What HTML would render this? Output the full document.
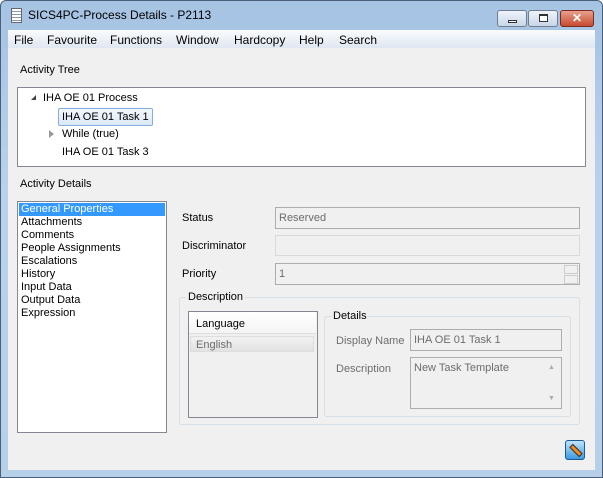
<!DOCTYPE html><html><head><style>
*{margin:0;padding:0;box-sizing:border-box}
body{width:603px;height:478px;overflow:hidden;font-family:"Liberation Sans",sans-serif;font-size:11px;color:#000;background:#fff}
.a{position:absolute}
.win{left:0;top:0;width:603px;height:478px;background:linear-gradient(#a6c3e3,#b9d1ec 40%,#b7d0ea);border:1px solid #4a5f7a;border-radius:6px 6px 0 0}
.t{white-space:nowrap}
.box{background:#f0f0f0;border:1px solid #c2c2c2}
</style></head><body>
<div class="a win"></div>
<div class="a" style="left:11px;top:8px;width:11px;height:15px;background:#fff;border:1px solid #667;background-image:repeating-linear-gradient(#fff 0 2px,#8a97a8 2px 3px)"></div>
<div class="a t" style="left:28px;top:8px;font-size:12px">SICS4PC-Process Details - P2113</div>
<div class="a" style="left:497px;top:10px;width:30px;height:17px;border:1px solid #6e7d92;border-radius:3px;background:linear-gradient(#f0f4fa,#c8d6e8)"><div class="a" style="left:10px;top:9px;width:9px;height:3px;border:1px solid #333;background:#fff"></div></div>
<div class="a" style="left:528px;top:10px;width:30px;height:17px;border:1px solid #6e7d92;border-radius:3px;background:linear-gradient(#f0f4fa,#c8d6e8)"><div class="a" style="left:10px;top:3px;width:9px;height:8px;border:1px solid #333;border-top-width:2px;background:#fff"></div></div>
<div class="a" style="left:560px;top:10px;width:34px;height:17px;border:1px solid #7a2a1e;border-radius:3px;background:linear-gradient(#e8a08c,#c84a30);color:#fff;font-weight:bold;text-align:center;font-size:12px;line-height:15px">✕</div>
<div class="a" style="left:8px;top:30px;width:587px;height:18px;background:linear-gradient(#fafbfd,#dfe7f2)"></div>
<div class="a t" style="left:14px;top:33px;font-size:12px">File</div>
<div class="a t" style="left:47px;top:33px;font-size:12px">Favourite</div>
<div class="a t" style="left:110px;top:33px;font-size:12px">Functions</div>
<div class="a t" style="left:176px;top:33px;font-size:12px">Window</div>
<div class="a t" style="left:234px;top:33px;font-size:12px">Hardcopy</div>
<div class="a t" style="left:299px;top:33px;font-size:12px">Help</div>
<div class="a t" style="left:339px;top:33px;font-size:12px">Search</div>
<div class="a" style="left:8px;top:48px;width:587px;height:422px;background:#f0f0f0"></div>
<div class="a t" style="left:20px;top:64px">Activity Tree</div>
<div class="a" style="left:17px;top:87px;width:569px;height:80px;background:#fff;border:1px solid #828790"></div>
<div class="a" style="left:31px;top:95px;width:0;height:0;border-left:5px solid transparent;border-bottom:5px solid #444"></div>
<div class="a t" style="left:43px;top:92px">IHA OE 01 Process</div>
<div class="a" style="left:58px;top:108px;width:95px;height:18px;border:1px solid #84acdd;border-radius:2px;background:linear-gradient(#f2f7fd,#dce9f8)"></div>
<div class="a t" style="left:62px;top:111px">IHA OE 01 Task 1</div>
<div class="a" style="left:49px;top:130px;width:0;height:0;border-top:4px solid transparent;border-bottom:4px solid transparent;border-left:5px solid #999"></div>
<div class="a t" style="left:62px;top:128px">While (true)</div>
<div class="a t" style="left:62px;top:146px">IHA OE 01 Task 3</div>
<div class="a t" style="left:20px;top:178px">Activity Details</div>
<div class="a" style="left:17px;top:201px;width:150px;height:232px;background:#fff;border:1px solid #828790"></div>
<div class="a" style="left:19px;top:203px;width:146px;height:13px;background:#3399ff"></div>
<div class="a" style="left:21px;top:203px;line-height:13px">
<div style="color:#fff">General Properties</div><div>Attachments</div><div>Comments</div><div>People Assignments</div><div>Escalations</div><div>History</div><div>Input Data</div><div>Output Data</div><div>Expression</div></div>
<div class="a t" style="left:182px;top:212px">Status</div>
<div class="a t" style="left:182px;top:240px">Discriminator</div>
<div class="a t" style="left:182px;top:268px">Priority</div>
<div class="a box t" style="left:275px;top:207px;width:305px;height:22px;border-color:#adadad;color:#6d6d6d;padding:4px 3px">Reserved</div>
<div class="a box" style="left:275px;top:235px;width:305px;height:21px;border-color:#d9d9d9"></div>
<div class="a box t" style="left:275px;top:263px;width:305px;height:22px;border-color:#adadad;color:#6d6d6d;padding:4px 3px">1</div>
<div class="a" style="left:564px;top:265px;width:14px;height:9px;border:1px solid #ccc"></div>
<div class="a" style="left:564px;top:275px;width:14px;height:9px;border:1px solid #ccc"></div>
<div class="a" style="left:179px;top:297px;width:401px;height:128px;border:1px solid #d5dfe5;border-radius:3px"></div>
<div class="a t" style="left:186px;top:291px;background:#f0f0f0;padding:0 2px">Description</div>
<div class="a" style="left:188px;top:311px;width:130px;height:107px;background:#f0f0f0;border:1px solid #828790"></div>
<div class="a" style="left:189px;top:312px;width:127px;height:22px;background:linear-gradient(#fff,#f5f5f5);border-bottom:1px solid #ddd"></div>
<div class="a t" style="left:196px;top:318px">Language</div>
<div class="a" style="left:190px;top:336px;width:124px;height:16px;background:linear-gradient(#f2f2f2,#e2e2e2);border:1px solid #ddd"></div>
<div class="a t" style="left:196px;top:339px;color:#6d6d6d">English</div>
<div class="a" style="left:324px;top:316px;width:247px;height:101px;border:1px solid #d5dfe5;border-radius:3px"></div>
<div class="a t" style="left:332px;top:310px;background:#f0f0f0;padding:0 1px">Details</div>
<div class="a t" style="left:336px;top:335px;color:#6d6d6d">Display Name</div>
<div class="a t" style="left:336px;top:363px;color:#6d6d6d">Description</div>
<div class="a box t" style="left:410px;top:329px;width:152px;height:22px;border-color:#adadad;color:#6d6d6d;padding:4px 3px">IHA OE 01 Task 1</div>
<div class="a box t" style="left:410px;top:357px;width:152px;height:52px;border-color:#adadad;color:#6d6d6d;padding:4px 3px">New Task Template</div>
<div class="a" style="left:548px;top:364px;color:#aaa;font-size:7px">▲</div>
<div class="a" style="left:548px;top:395px;color:#aaa;font-size:7px">▼</div>
<div class="a" style="left:565px;top:440px;width:20px;height:20px;border:1px solid #1a5a9a;border-radius:3px;background:linear-gradient(#bfe4ff,#3b9be0)"><div class="a" style="left:3px;top:7px;width:14px;height:5px;background:#f08a20;border:1px solid #333;transform:rotate(45deg)"></div></div>
</body></html>
